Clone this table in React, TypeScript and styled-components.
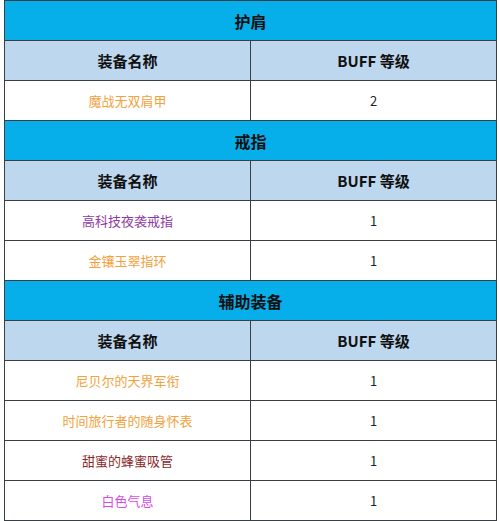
import React from "react";
import styled, { createGlobalStyle } from "styled-components";

type Item = { name: string; level: number; color: string };
type Section = { title: string; items: Item[] };

const ORANGE = "#f2a23c";
const PURPLE = "#8e3aa0";
const BROWN = "#8a2b2b";
const PINK = "#d84ae6";

const sections: Section[] = [
  { title: "护肩", items: [{ name: "魔战无双肩甲", level: 2, color: ORANGE }] },
  {
    title: "戒指",
    items: [
      { name: "高科技夜袭戒指", level: 1, color: PURPLE },
      { name: "金镶玉翠指环", level: 1, color: ORANGE },
    ],
  },
  {
    title: "辅助装备",
    items: [
      { name: "尼贝尔的天界军衔", level: 1, color: ORANGE },
      { name: "时间旅行者的随身怀表", level: 1, color: ORANGE },
      { name: "甜蜜的蜂蜜吸管", level: 1, color: BROWN },
      { name: "白色气息", level: 1, color: PINK },
    ],
  },
];

function App() {
  return (
    <>
      <GlobalStyle />
      <Page>
        <Table>
          <tbody>
            {sections.map((s) => (
              <React.Fragment key={s.title}>
                <tr>
                  <SectionCell colSpan={2}>{s.title}</SectionCell>
                </tr>
                <tr>
                  <HeadCell>装备名称</HeadCell>
                  <HeadCell>BUFF 等级</HeadCell>
                </tr>
                {s.items.map((it) => (
                  <tr key={it.name}>
                    <DataCell $color={it.color}>{it.name}</DataCell>
                    <DataCell $color="#222">{it.level}</DataCell>
                  </tr>
                ))}
              </React.Fragment>
            ))}
          </tbody>
        </Table>
      </Page>
    </>
  );
}

const GlobalStyle = createGlobalStyle`
  body {
    margin: 0;
    background: #fff;
    font-family: "Noto Sans CJK SC", "Noto Sans", sans-serif;
  }
`;

const Page = styled.div`
  padding: 0 4px;
  width: 500px;
  box-sizing: border-box;
`;

const Table = styled.table`
  width: 493px;
  border-collapse: collapse;
  table-layout: fixed;
  border: 1px solid #3a3f44;
`;

const Cell = styled.td`
  height: 39px;
  padding: 0;
  text-align: center;
  vertical-align: middle;
  border: 1px solid #3a3f44;
  line-height: 1;
`;

const SectionCell = styled(Cell)`
  background: #06aeea;
  color: #111;
  font-weight: 700;
  font-size: 16px;
`;

const HeadCell = styled(Cell)`
  background: #bdd7ee;
  color: #111;
  font-weight: 700;
  font-size: 15px;
  width: 50%;
`;

const DataCell = styled(Cell)<{ $color: string }>`
  background: #fff;
  color: ${(p) => p.$color};
  font-size: 13px;
`;

export default App;
